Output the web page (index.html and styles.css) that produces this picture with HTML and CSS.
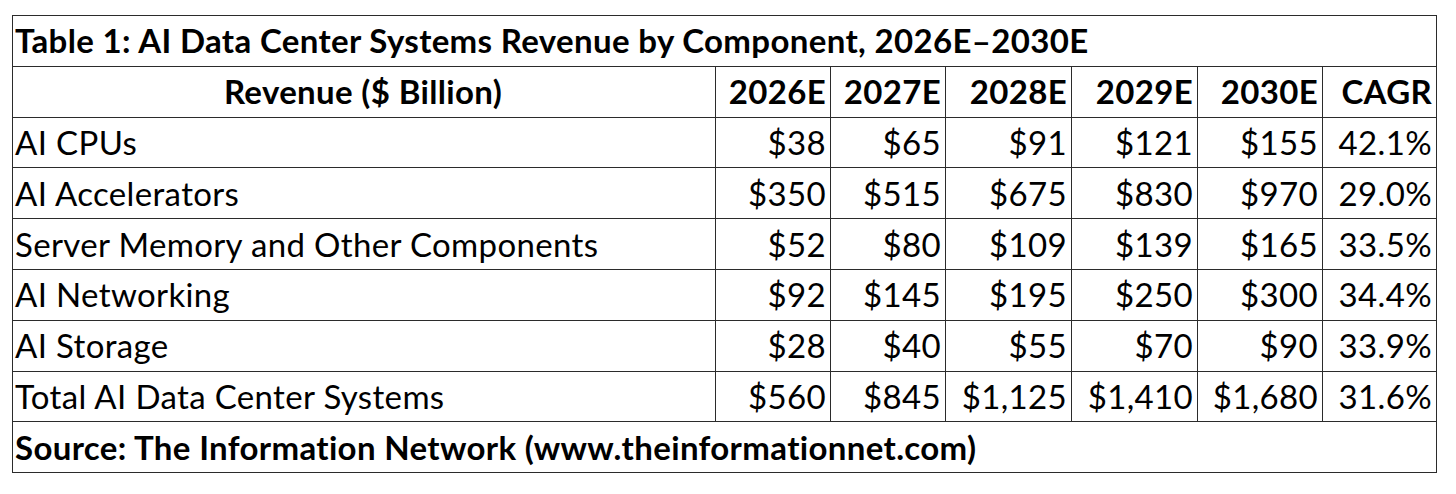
FILE: index.html
```html
<!DOCTYPE html>
<html lang="en">
<head>
<meta charset="utf-8">
<title>Table 1: AI Data Center Systems Revenue by Component</title>
<link rel="stylesheet" href="styles.css">
</head>
<body>
<table class="data-table">
  <colgroup>
    <col class="col-label">
    <col class="col-y1">
    <col class="col-y2">
    <col class="col-y3">
    <col class="col-y4">
    <col class="col-y5">
    <col class="col-cagr">
  </colgroup>
  <thead>
    <tr class="title-row"><th colspan="7" class="title">Table 1: AI Data Center Systems Revenue by Component, 2026E–2030E</th></tr>
    <tr class="head-row">
      <th class="head-label">Revenue ($ Billion)</th>
      <th class="num">2026E</th>
      <th class="num">2027E</th>
      <th class="num">2028E</th>
      <th class="num">2029E</th>
      <th class="num">2030E</th>
      <th class="num">CAGR</th>
    </tr>
  </thead>
  <tbody>
    <tr><td class="label">AI CPUs</td><td class="num">$38</td><td class="num">$65</td><td class="num">$91</td><td class="num">$121</td><td class="num">$155</td><td class="num">42.1%</td></tr>
    <tr><td class="label">AI Accelerators</td><td class="num">$350</td><td class="num">$515</td><td class="num">$675</td><td class="num">$830</td><td class="num">$970</td><td class="num">29.0%</td></tr>
    <tr><td class="label">Server Memory and Other Components</td><td class="num">$52</td><td class="num">$80</td><td class="num">$109</td><td class="num">$139</td><td class="num">$165</td><td class="num">33.5%</td></tr>
    <tr><td class="label">AI Networking</td><td class="num">$92</td><td class="num">$145</td><td class="num">$195</td><td class="num">$250</td><td class="num">$300</td><td class="num">34.4%</td></tr>
    <tr><td class="label">AI Storage</td><td class="num">$28</td><td class="num">$40</td><td class="num">$55</td><td class="num">$70</td><td class="num">$90</td><td class="num">33.9%</td></tr>
    <tr><td class="label">Total AI Data Center Systems</td><td class="num">$560</td><td class="num">$845</td><td class="num">$1,125</td><td class="num">$1,410</td><td class="num">$1,680</td><td class="num">31.6%</td></tr>
  </tbody>
  <tfoot>
    <tr><td colspan="7" class="source">Source: The Information Network (www.theinformationnet.com)</td></tr>
  </tfoot>
</table>
</body>
</html>
```
FILE: styles.css
```css
html, body {
  margin: 0;
  background: #ffffff;
}
body {
  padding: 15px 0 0 12px;
  font-family: Lato, "Open Sans", "Noto Sans", sans-serif;
  color: #000;
}
.data-table {
  border-collapse: collapse;
  table-layout: fixed;
  width: 1424px;
  font-size: 33px;
  letter-spacing: 0.35px;
  line-height: 1;
}
.col-label { width: 703px; }
.col-y1 { width: 115px; }
.col-y2 { width: 115px; }
.col-y3 { width: 126px; }
.col-y4 { width: 126px; }
.col-y5 { width: 125px; }
.col-cagr { width: 114px; }
.data-table th,
.data-table td {
  border: 1px solid #2b2b2b;
  height: 50.8px;
  padding: 0 4px 0 2px;
  box-sizing: border-box;
  white-space: nowrap;
  vertical-align: middle;
}
.data-table th { font-weight: 700; }
.title { text-align: left; }
.head-label { text-align: center; }
.num { text-align: right; }
.label { text-align: left; font-weight: 400; }
.source { text-align: left; font-weight: 700; }
```
